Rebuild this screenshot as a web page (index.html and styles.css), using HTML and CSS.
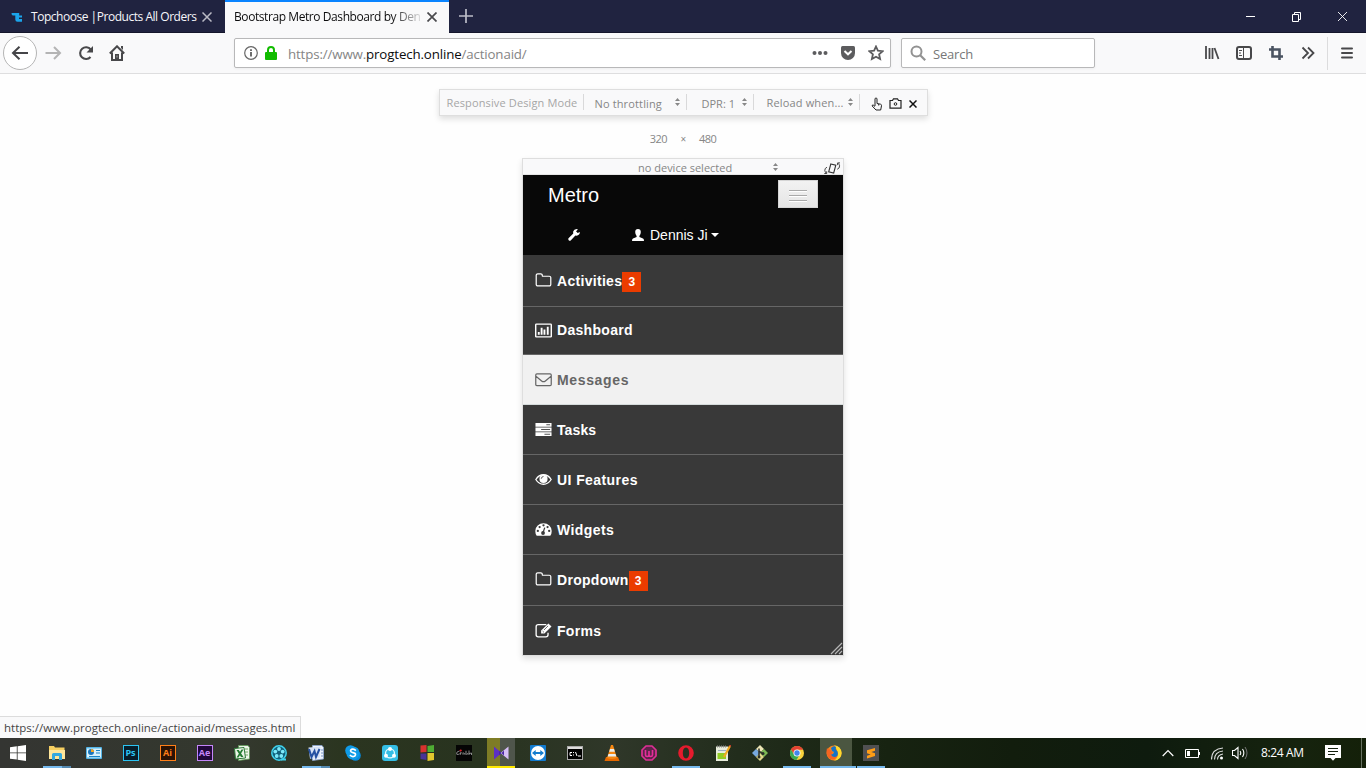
FILE: index.html
```html
<!DOCTYPE html>
<html lang="en">
<head>
<meta charset="utf-8">
<title>Bootstrap Metro Dashboard by Dennis Ji</title>
<link rel="stylesheet" href="styles.css">
</head>
<body>
<div class="screen">
  <header class="tabs">
    <div class="tab">
      <svg class="favicon" width="12" height="11" viewBox="0 0 12 11"><path d="M.5 1h7.700v2.500H11v2H8V7h3v2.700H6.500Q4.300 9.700 4.300 7.500V3.600H2Q.5 3.600.5 1z" fill="#1ba4ea"/></svg>
      <span class="tab-title first-title">Topchoose |Products All Orders</span>
      <svg class="tab-close" width="10" height="10" viewBox="0 0 10 10"><path d="M.5 .5l9 9M9.500 .5l-9 9" stroke="#b9bac4" stroke-width="1.500"/></svg>
    </div>
    <div class="tab active">
      <span class="tab-title second-title">Bootstrap Metro Dashboard by Den</span>
      <svg class="tab-close" width="10" height="10" viewBox="0 0 10 10"><path d="M.5 .5l9 9M9.500 .5L.5 9.500" stroke="#4a4a4d" stroke-width="1.700"/></svg>
    </div>
    <svg class="new-tab" width="14" height="14" viewBox="0 0 14 14"><path d="M7 0v14M0 7h14" stroke="#bcbdc8" stroke-width="1.700"/></svg>
    <div class="window-buttons">
      <svg width="11" height="11" viewBox="0 0 11 11"><path d="M1 5.500h9" stroke="#fff"/></svg>
      <svg width="11" height="11" viewBox="0 0 11 11"><path d="M1.500 3.500h6v7h-6zM3.500 3V1.500h6v7H8" fill="none" stroke="#fff"/></svg>
      <svg width="11" height="11" viewBox="0 0 11 11"><path d="M1 1l9 9M10 1l-9 9" stroke="#fff" stroke-width=".9"/></svg>
    </div>
  </header>

  <nav class="toolbar">
    <div class="back"><svg width="18" height="16" viewBox="0 0 18 16"><path d="M17 8H2M8.500 1.800L2 8l6.500 6.200" fill="none" stroke="#454548" stroke-width="2"/></svg></div>
    <svg class="forward" width="17" height="14" viewBox="0 0 17 14"><path d="M.5 7h14M9 1l6 6-6 6" fill="none" stroke="#b4b4b4" stroke-width="2"/></svg>
    <svg class="reload" width="16" height="16" viewBox="0 0 16 16"><path d="M12.700 4.500A5.900 5.900 0 1 0 12.500 12" fill="none" stroke="#48484a" stroke-width="2.100"/><path d="M15 1v6.500H8.500z" fill="#48484a"/></svg>
    <svg class="home" width="16" height="16" viewBox="0 0 16 16"><path d="M0.800 8.500L8 1.300l7.200 7.200M3 7.500v7.400h10V7.500" fill="none" stroke="#48484a" stroke-width="2"/><path d="M12 1h2v4l-2-2zM6 9h4v6H6z" fill="#48484a"/><path d="M8 10.500v2" stroke="#aaa"/></svg>
    <div class="url-box">
      <svg width="14" height="14" viewBox="0 0 14 14"><circle cx="7" cy="7" r="6.300" fill="none" stroke="#666" stroke-width="1.200"/><path d="M7 6v4.500M7 3.200v1.700" stroke="#555" stroke-width="1.700"/></svg>
      <svg class="lock" width="12" height="14" viewBox="0 0 12 14"><path d="M3 7V4a3 3 0 0 1 6 0v3" fill="none" stroke="#12bc00" stroke-width="2"/><rect y="6" width="12" height="8" rx="1" fill="#12bc00"/></svg>
      <span class="url">https://www.<b>progtech.online</b>/actionaid/</span>
      <span class="url-actions">
        <svg width="16" height="16" viewBox="0 0 16 16"><g fill="#5c5c5e"><circle cx="2.500" cy="8" r="2"/><circle cx="8" cy="8" r="2"/><circle cx="13.500" cy="8" r="2"/></g></svg>
        <svg width="16" height="16" viewBox="0 0 16 16"><path d="M2.500 1h11Q15 1 15 2.500V8A7 7 0 0 1 1 8V2.500Q1 1 2.500 1z" fill="#5c5c5e"/><path d="M4.500 6L8 9.300 11.500 6" fill="none" stroke="#fff" stroke-width="2"/></svg>
        <svg width="16" height="16" viewBox="0 0 16 16"><path d="M8 1.500l1.900 4.200 4.700.5-3.500 3.100 1 4.700L8 11.700l-4.100 2.300 1-4.700L1.400 6.200l4.700-.5z" fill="none" stroke="#5c5c5e" stroke-width="1.800"/></svg>
      </span>
    </div>
    <div class="search-box">
      <svg width="16" height="16" viewBox="0 0 16 16"><circle cx="6.500" cy="6.500" r="5" fill="none" stroke="#929292" stroke-width="2"/><path d="M10 10l5.200 5.200" stroke="#929292" stroke-width="2.200"/></svg>
      <span class="search-text">Search</span>
    </div>
    <div class="tools">
      <svg width="16" height="16" viewBox="0 0 16 16"><path d="M2 1v13M5.500 3v11M8.500 3v11M10.500 3l4 11" stroke="#48484a" stroke-width="1.800"/></svg>
      <svg width="16" height="16" viewBox="0 0 16 16"><rect x="1" y="2" width="14" height="12" rx="2" fill="none" stroke="#48484a" stroke-width="2"/><path d="M7.500 2v12M3 5.500h3M3 8h2M3 10.500h3" stroke="#48484a"/></svg>
      <svg width="16" height="16" viewBox="0 0 16 16"><path d="M4.500 1v10.500H15M1 4.500h10.500V15" fill="none" stroke="#4a5361" stroke-width="2.600"/></svg>
      <svg width="16" height="16" viewBox="0 0 16 16"><path d="M2.500 2.500L8 8l-5.500 5.500M8 2.500L13.500 8 8 13.500" fill="none" stroke="#48484a" stroke-width="1.800"/></svg>
      <i class="tool-line"></i>
      <svg class="burger" width="12" height="16" viewBox="0 0 12 16"><path d="M1 3.500h10M1 8h10M1 12.500h10" stroke="#48484a" stroke-width="2" stroke-linecap="round"/></svg>
    </div>
  </nav>

  <main class="content">
    <section class="rdm">
      <span class="cell c-name"><span class="t-rdm">Responsive Design Mode</span></span>
      <span class="cell c-throttle"><span class="t-throttle">No throttling</span><svg class="ud" width="5" height="8" viewBox="0 0 5 8"><path d="M0 3L2.500 0 5 3zM0 5l2.500 3L5 5z" fill="#888"/></svg></span>
      <span class="cell c-dpr"><span class="t-dpr">DPR: 1</span><svg class="ud" width="5" height="8" viewBox="0 0 5 8"><path d="M0 3L2.500 0 5 3zM0 5l2.500 3L5 5z" fill="#888"/></svg></span>
      <span class="cell c-reload"><span class="t-reload">Reload when...</span><svg class="ud" width="5" height="8" viewBox="0 0 5 8"><path d="M0 3L2.500 0 5 3zM0 5l2.500 3L5 5z" fill="#888"/></svg></span>
      <span class="rdm-icons">
        <svg width="12" height="14" viewBox="0 0 12 14"><path d="M4 9V2q0-1 1-1t1 1v4.500l3.500.7q1.200.3 1 1.500L9.700 13H5L1.200 9Q1 7.700 2.200 8L4 9.500M7.700 7v1.500" fill="none" stroke="#222"/></svg>
        <svg width="13" height="11" viewBox="0 0 13 11"><path d="M1 2.500h2.500L4.500 .8h4l1 1.700H12v7.700H1z" fill="none" stroke="#222" stroke-width="1.200"/><circle cx="6.500" cy="6" r="1.300" fill="none" stroke="#222"/></svg>
        <svg class="rdm-close" width="8" height="8" viewBox="0 0 8 8"><path d="M.5 .5l7 7M7.500 .5l-7 7" stroke="#111" stroke-width="1.500"/></svg>
      </span>
    </section>
    <div class="dims"><span>320</span><span class="times">×</span><span>480</span></div>

    <section class="phone">
      <div class="device"><span class="t-device">no device selected</span><svg class="ud" width="5" height="8" viewBox="0 0 5 8"><path d="M0 3L2.500 0 5 3zM0 5l2.500 3L5 5z" fill="#888"/></svg>
        <svg class="rotate" width="17" height="13" viewBox="0 0 17 13"><g fill="none" stroke="#333"><path d="M6.800 2l5 1.200-2.100 7.800-5-1.200z" stroke-width="1.100"/><path d="M3 5.200Q.6 6.200.8 8.500q.2 1.600 1.500 2.700M.3 11.500h2.400V9.300M13.200 7.300q2.600-1 2.400-3.500-.3-1.600-1.600-2.500M16 .9h-2.400v2.200" stroke-width=".9"/></g></svg>
      </div>
      <div class="brandbar">
        <div class="brand-row"><span class="brand">Metro</span><div class="toggle"><i></i><i></i><i></i></div></div>
        <div class="user-row">
          <svg class="wrench" width="12" height="12" viewBox="0 0 12 12"><path d="M8.500 0Q6 .2 5.300 2.200 5 3.400 5.300 4.500L.5 9.300Q-.1 10.200.7 11.200q1 .9 2 .2L7.400 6.600q1.600.4 3-.6Q12 4.800 11.800 3L9.700 4 8 2.300 10 .5z" fill="#fff"/></svg>
          <svg class="user" width="12" height="12" viewBox="0 0 12 12"><path d="M6 0q2.800 0 2.800 3Q8.800 5.500 7.400 7v1l3.600 1.600q1 .5 1 2.400H0q0-1.900 1-2.400L4.600 8V7Q3.200 5.500 3.200 3 3.200 0 6 0z" fill="#fff"/></svg>
          <span class="username">Dennis Ji</span><i class="caret"></i>
        </div>
      </div>
      <ul class="menu">
        <li class="r51"><svg viewBox="0 0 1792 1792"><path d="M1600 1312V608q0-40-28-68t-68-28H800q-40 0-68-28t-28-68v-64q0-40-28-68t-68-28H288q-40 0-68 28t-28 68v960q0 40 28 68t68 28h1216q40 0 68-28t28-68zm128-704v704q0 92-66 158t-158 66H288q-92 0-158-66T64 1312V352q0-92 66-158t158-66h320q92 0 158 66t66 158v32h672q92 0 158 66t66 158z"/></svg><span>Activities</span><em>3</em></li>
        <li class="r47 dash"><svg viewBox="0 0 18 18"><path d="M1.500 1.500h15q1.500 0 1.500 1.300v12.500q0 1.200-1.500 1.200h-15Q0 16.500 0 15.300V2.800Q0 1.500 1.500 1.500zM1.500 3v12h15V3z" fill-rule="evenodd"/><path d="M3 10.500h2v3H3zM6 6h2v7.500H6zM9 8h2v5.500H9zM12.500 5h2v8.500h-2z"/></svg><span>Dashboard</span></li>
        <li class="r49 hover"><svg viewBox="0 0 18 18"><path d="M2 3h14q1.200 0 1.200 1.200v10Q17.200 15.400 16 15.400H2Q.8 15.400.8 14.200v-10Q.8 3 2 3zM1 5.500q3 2.500 6 5 2 1.700 4 0l6-5" fill="none" stroke="#666" stroke-width="1.300"/></svg><span class="t-messages">Messages</span></li>
        <li class="r49"><svg viewBox="0 0 18 18"><path d="M.5 2h17v4H.5zM.5 7h17v4H.5zM.5 12h17v4H.5z"/><path d="M12 4h4M6.500 9H16M10 14h6" stroke="#555" stroke-width="1.200"/></svg><span class="t-tasks">Tasks</span></li>
        <li class="r49"><svg viewBox="0 0 18 18"><path d="M.9 9Q4 4 9 4t8.100 5Q14 14 9 14T.9 9z" fill="none" stroke="#fff" stroke-width="1.400"/><circle cx="9" cy="8.400" r="4.300"/><path d="M6.600 8.200Q6.800 6 9 5.800" fill="none" stroke="#444" stroke-width=".9"/></svg><span class="t-features">UI Features</span></li>
        <li class="r49"><svg viewBox="0 0 18 18"><path d="M.3 10.500a8.700 8.200 0 0 1 17.400 0q0 3-1.500 5.200H1.800Q.3 13.500.3 10.500z"/><g fill="#3a3a3a"><circle cx="3" cy="10.500" r="1.200"/><circle cx="4.900" cy="6.400" r="1.200"/><circle cx="9" cy="4.600" r="1.200"/><circle cx="13.300" cy="6.400" r="1.200"/><circle cx="15" cy="10.500" r="1.200"/><circle cx="8.500" cy="12.700" r="2"/></g><path d="M8.500 12.500L10.300 7" stroke="#3a3a3a" stroke-width="1.300"/></svg><span class="t-features">Widgets</span></li>
        <li class="r50"><svg viewBox="0 0 1792 1792"><path d="M1600 1312V608q0-40-28-68t-68-28H800q-40 0-68-28t-28-68v-64q0-40-28-68t-68-28H288q-40 0-68 28t-28 68v960q0 40 28 68t68 28h1216q40 0 68-28t28-68zm128-704v704q0 92-66 158t-158 66H288q-92 0-158-66T64 1312V352q0-92 66-158t158-66h320q92 0 158 66t66 158v32h672q92 0 158 66t66 158z"/></svg><span>Dropdown</span><em>3</em></li>
        <li class="r49 last"><svg viewBox="0 0 18 18"><path d="M12 2.800H3.500Q1.200 2.800 1.200 5v8.500q0 2.200 2.300 2.200h8q2.300 0 2.300-2.200v-2" fill="none" stroke="#fff" stroke-width="1.400"/><path d="M6.500 9L14.200 1.500l3.300 3.200L10 12.300H6.500z"/><path d="M8 9.500l1.500 1.500M9.500 8.500l4.300-4.300" stroke="#555" stroke-width=".9"/></svg><span>Forms</span></li>
      </ul>
      <svg class="grip" width="13" height="13" viewBox="0 0 13 13"><path d="M1 12L12 1M5 12l7-7M9 12l3-3" stroke="#b5b5b5" stroke-width="1.200"/></svg>
    </section>
    <div class="status"><span class="t-status">https://www.progtech.online/actionaid/messages.html</span></div>
  </main>

  <footer class="taskbar">
    <div class="app start"><svg viewBox="0 0 16 16"><path d="M0 2.300L6.800 1.300v6.200H0zM7.600 1.200L16 0v7.500H7.600zM0 8.300h6.800v6.300L0 13.700zM7.600 8.300H16V16l-8.400-1.200z" fill="#fff"/></svg></div>
    <div class="app open multi"><svg viewBox="0 0 16 16"><path d="M0 1h5l1 1.500h9.500V14H0z" fill="#f6cf61"/><path d="M0 5h16v9H0z" fill="#ffe69a"/><path d="M3 15V9.500Q3 8 4.500 8h7Q13 8 13 9.500V15h-3v-4H6v4z" fill="#34a8df"/></svg></div>
    <div class="app"><svg viewBox="0 0 16 16"><rect y="2" width="16" height="12" rx="1" fill="#55b5e7"/><path d="M1 3.500h14v9H1z" fill="#d8f1fc"/><circle cx="5" cy="7" r="3" fill="#1b75bb"/><path d="M5 7V4a3 3 0 0 1 3 3z" fill="#f5a623"/><path d="M10 5.500h4M10 8h4M3 11.500h11" stroke="#1b84c5" stroke-width="1.200"/></svg></div>
    <div class="app"><div class="adobe ps">Ps</div></div>
    <div class="app"><div class="adobe ai">Ai</div></div>
    <div class="app"><div class="adobe ae">Ae</div></div>
    <div class="app"><svg viewBox="0 0 16 16"><path d="M4.500.5H14l1.500 2V14l-11 1.500z" fill="#edf5e9" stroke="#5f9a57" stroke-width=".8"/><path d="M11 4h3M11 7h3M11 10h3" stroke="#74a867"/><path d="M.5 3.500L10 2.500l1.500 10.500-10 1z" fill="#edf5e9" stroke="#2c7a37"/><path d="M2.500 5h2.300l4.700 7H7zM7.500 4.500h2l-5 8h-2z" fill="#237b31"/></svg></div>
    <div class="app"><svg viewBox="0 0 16 16"><circle cx="8" cy="8" r="7.200" fill="#11617b" stroke="#3fd2ed" stroke-width="1.500"/><g fill="#7de9f9"><circle cx="8" cy="4" r="1.900"/><circle cx="4.300" cy="6.600" r="1.900"/><circle cx="11.700" cy="6.600" r="1.900"/><circle cx="5.700" cy="11" r="1.900"/><circle cx="10.300" cy="11" r="1.900"/></g><path d="M10 14.500h5" stroke="#3fd2ed" stroke-width="2"/></svg></div>
    <div class="app open multi"><svg viewBox="0 0 16 16"><path d="M4.500.5H14l1.500 2V14l-11 1.500z" fill="#eef3fc" stroke="#8aa5d0" stroke-width=".8"/><path d="M13 5h2M13 8h2M13 11h2" stroke="#7794c4"/><path d="M.5 2.500l12-.7-1 11-9.500 1z" fill="#d6e1f5"/><path d="M1 4l2.500 8 3-6 1.500 6 3.500-8" fill="none" stroke="#2450a2" stroke-width="2"/></svg></div>
    <div class="app"><svg viewBox="0 0 16 16"><circle cx="5.500" cy="5.500" r="5.300" fill="#119be8"/><circle cx="10.500" cy="10.500" r="5.300" fill="#0789da"/><circle cx="8" cy="8" r="6.600" fill="#0e9be7"/><path d="M10.800 5.600Q9.500 4 7.600 4.200 5.500 4.500 5.600 6q.1 1.300 2.400 1.700 2.700.5 2.500 2.200-.3 1.700-2.500 1.700-2 0-3-1.700" fill="none" stroke="#fff" stroke-width="1.700"/></svg></div>
    <div class="app"><svg viewBox="0 0 16 16"><rect width="16" height="16" rx="3" fill="#35bee5"/><circle cx="8" cy="8.400" r="4.500" fill="none" stroke="#e4faff" stroke-width="1.300"/><g fill="#fff"><circle cx="8" cy="4" r="2"/><circle cx="4" cy="10.800" r="2"/><circle cx="12" cy="10.800" r="2"/></g></svg></div>
    <div class="app"><svg viewBox="0 0 16 16"><path d="M1.500.5l6-.5v7l-6 .5z" fill="#d8322e"/><path d="M8.500 1L15 0v7H8.500z" fill="#4fad34"/><path d="M1.500 8.500h6V15l-6-1z" fill="#493396"/><path d="M8.500 8H15v7l-6.500 1z" fill="#e2c72e"/></svg></div>
    <div class="app"><svg viewBox="0 0 16 16"><rect width="16" height="16" fill="#050505"/><path d="M3.500 6.200Q0 6.500.8 9.300q1.500.8 2.700-.8M4 10l1-3M5.500 8h1M7.500 7.500l-.7 2M9 8L8 9.700M10 10V5.800M12 8l-1 1.700M13 5.500V10M13 8.500l2.500-.5v2" fill="none" stroke="#aaa" stroke-width=".8"/><path d="M3.800 6l1.700-1" stroke="#d91c25" stroke-width="2"/></svg></div>
    <div class="app kmp"><svg viewBox="0 0 16 16"><path d="M1 1.500L8.500 8 1 14.500z" fill="#5c2fc4"/><path d="M15.500 1.500L7.500 8l8 6.500z" fill="#d6bdf7"/><path d="M6 5.800L8.500 8 11 5.500v5L8.500 8 6 10.200z" fill="#4a25a5"/></svg></div>
    <div class="app"><svg viewBox="0 0 16 16"><rect width="16" height="16" rx="1" fill="#127bd0"/><circle cx="8" cy="8" r="7" fill="#fff"/><path d="M2 8l3.700-3v2h4.600V5L14 8l-3.700 3V9H5.700v2z" fill="#137cce"/></svg></div>
    <div class="app"><svg viewBox="0 0 16 16"><rect x=".5" y="1.500" width="15" height="13" fill="#000" stroke="#aaa"/><path d="M1 3h14" stroke="#ddd" stroke-width="2"/><path d="M5 7.500H3v3h2M6.500 7v1M6.500 9.500v1M8.500 7l1.500 4M11 11h3" fill="none" stroke="#fff"/></svg></div>
    <div class="app"><svg viewBox="0 0 16 16"><path d="M2 12h12l1.500 4H.5z" fill="#e76900"/><path d="M7 0h2l4 13q-5 2-10 0z" fill="#f58813"/><path d="M6 4h4l.8 2.700H5.200zM4.500 9h7l.8 2.500H3.700z" fill="#e9eef0"/></svg></div>
    <div class="app"><svg viewBox="0 0 16 16"><path d="M5 1h6l4 4v6l-4 4H5l-4-4V5z" fill="#5d2449" stroke="#df2f96" stroke-width="1.700" stroke-linejoin="round"/><path d="M4.500 5v5q0 1.500 1.700 1.500T8 10V6v4q0 1.500 1.700 1.500T11.500 10V5" fill="none" stroke="#e72d9b" stroke-width="1.600"/></svg></div>
    <div class="app open"><svg viewBox="0 0 16 16"><path fill-rule="evenodd" d="M8 .2a7.800 7.800 0 1 0 0 15.600A7.800 7.800 0 1 0 8 .2zM8 2.500c2 0 3.200 2.400 3.200 5.500S10 13.500 8 13.500 4.800 11.100 4.800 8 6 2.500 8 2.500z" fill="#e51b2d"/></svg></div>
    <div class="app"><svg viewBox="0 0 16 16"><path d="M1 1.500h12V16H1z" fill="#e8eddc"/><path d="M2 1.500h10" stroke="#888" stroke-width="2" stroke-dasharray="1 1"/><path d="M2.500 8H11v6H2.500z" fill="#91cd24"/><path d="M3 5.500h8" stroke="#9dacc0"/><path d="M15 1l-6 11" stroke="#efaa22" stroke-width="2.200"/><path d="M14.500 0l1.500 1" stroke="#bf362d" stroke-width="2"/></svg></div>
    <div class="app"><svg viewBox="0 0 16 16"><path d="M8 0l4 4-4 4-4-4z" fill="#ece5b6"/><path d="M4 4l4 4-4 4-4-4z" fill="#77a8dd"/><path d="M12 4l4 4-4 4-4-4z" fill="#7dba55"/><path d="M8 8l4 4-4 4-4-4z" fill="#e2d98b"/><path d="M7 3.500v9M7 6l4 3" stroke="#292d28" stroke-width="1.500"/><circle cx="7" cy="12" r="1.500" fill="#292d28"/><circle cx="11" cy="8.500" r="1.500" fill="#292d28"/></svg></div>
    <div class="app open"><svg viewBox="0 0 16 16"><circle cx="8" cy="8" r="7" fill="#f9d33c"/><path d="M1.900 4.500A7 7 0 0 1 14.200 4.700H8L5 9.600z" fill="#e34133"/><path d="M1.900 4.500A7 7 0 0 0 7.500 15l3-5L5 9.600z" fill="#39a854"/><circle cx="8" cy="8" r="3.500" fill="#fff"/><circle cx="8" cy="8" r="2.700" fill="#4286ed"/></svg></div>
    <div class="app open focused"><svg viewBox="0 0 16 16"><circle cx="8" cy="8" r="7.500" fill="#f9851b"/><path d="M8 .3Q15 1 15.700 8q-.4 7-7.700 7.800Q12.500 13 12 8 10 2 8 .3z" fill="#ffd92e"/><path d="M5 3Q8 0 10 2q-1 2 1.500 4.500 1.500 5-3 6.200Q5 13 4 9.500l3-.5 1-2-2-1z" fill="#1673c7"/><path d="M1 3q1 1.500 3 1.500L7 8l-2 1.800Q7 13 11 11.500 8 16 3.500 13.500-.5 10 1 3z" fill="#f56521"/></svg></div>
    <div class="app open"><svg viewBox="0 0 16 16"><rect width="16" height="16" fill="#505052"/><path d="M4 5.300L12 3v2.800L8.300 7 12 8.200v2.900L4 13.500v-2.800l3.700-1.200L4 8.300z" fill="#ff9d16"/></svg></div>
    <div class="tray">
      <svg class="up" width="12" height="8" viewBox="0 0 12 8"><path d="M.7 7L6 1.500 11.300 7" fill="none" stroke="#fff" stroke-width="1.200"/></svg>
      <svg class="battery" width="15" height="9" viewBox="0 0 15 9"><path d="M.5.500h13v8H.5zM14.500 3v3" fill="none" stroke="#fff"/><path d="M2 2h3v5H2z" fill="#fff"/></svg>
      <svg class="wifi" width="12" height="13" viewBox="0 0 12 13"><g fill="none" stroke="#ddd"><path d="M.5 12.500Q.5 2 12 1M3.500 12.500Q3.500 5 12 4M6.500 12.500Q6.500 8 12 7" stroke-width="1.100"/></g><circle cx="10.500" cy="11" r="1.500" fill="#fff"/></svg>
      <svg class="volume" width="16" height="14" viewBox="0 0 16 14"><path d="M.5 4.500h2L6 1.500v11L2.500 9.500h-2zM8 5q1.500 2 0 4M10.500 3q2.700 4 0 8" fill="none" stroke="#fff" stroke-width="1.100"/><path d="M13 1q4 6 0 12" fill="none" stroke="#777"/></svg>
      <span class="clock">8:24 AM</span>
      <svg class="action" width="16" height="16" viewBox="0 0 16 16"><path d="M0 0h16v13h-5.500L8 15.800 5.500 13H0z" fill="#fff"/><path d="M3 3.500h10M3 6.500h10M3 9.500h7" stroke="#13210e"/></svg>
      <i class="peek"></i>
    </div>
  </footer>
</div>
</body>
</html>
```
FILE: styles.css
```css
* { box-sizing: border-box; }
body { margin: 0; font-family: "Open Sans", "Noto Sans", sans-serif; }
svg { display: block; flex: none; }
i { display: block; flex: none; }
.screen { width: 1366px; height: 768px; display: flex; flex-direction: column; overflow: hidden; background: #fefefe; }

.tabs { height: 33px; flex: none; display: flex; align-items: center; background: #202340; box-shadow: inset 0 -1px #14162b; font-size: 12px; white-space: nowrap; }
.tab { width: 225px; height: 33px; display: flex; align-items: center; color: #f6f6fa; padding: 0 13px 0 11px; }
.tab.active { width: 224px; background: #f9f9fa; border-top: 2px solid #0a84ff; color: #0c0c0d; padding: 0 12px 2px 9px; }
.tab-close { margin-left: auto; }
.favicon { margin-top: 1px; }
.first-title { margin-left: 8px; letter-spacing: -.47px; }
.second-title { width: 187px; letter-spacing: -.42px; mask-image: linear-gradient(90deg, #000 84%, transparent 102%); }
.new-tab { margin: 0 0 2px 10px; }
.window-buttons { margin-left: auto; margin-right: 18px; display: flex; gap: 35px; }

.toolbar { height: 41px; flex: none; display: flex; align-items: center; background: #f9f9fa; border-bottom: 1px solid #dededf; padding-left: 3px; }
.back { width: 34px; height: 34px; border: 1px solid #b5b5b5; border-radius: 50%; background: #fff; display: flex; align-items: center; justify-content: center; }
.forward { margin-left: 8px; }
.reload { margin-left: 16px; }
.home { margin-left: 15px; }
.url-box, .search-box { height: 30px; border: 1px solid #b8b8b9; border-radius: 2px; background: #fff; display: flex; align-items: center; box-shadow: 0 1px 3px rgba(0,0,0,.05); }
.url-box { width: 657px; margin-left: 109px; padding: 0 6px 0 9px; }
.lock { margin: 0 11px 0 7px; }
.url { font-size: 13.300px; color: #858585; letter-spacing: -.14px; padding-top: 2px; }
.url b { font-weight: 400; color: #0c0c0d; }
.url-actions { margin-left: auto; display: flex; gap: 12px; }
.search-box { width: 194px; margin-left: 10px; padding-left: 8px; }
.search-text { margin-left: 7px; font-size: 13px; color: #777; letter-spacing: -.2px; padding-top: 2px; }
.tools { margin-left: auto; display: flex; align-items: center; gap: 16px; }
.tool-line { width: 1px; height: 33px; background: #dcdcdd; margin-left: -5px; }
.burger { margin: 0 13px 0 -3px; }

.content { height: 664px; flex: none; position: relative; display: flex; flex-direction: column; align-items: center; padding-top: 15px; }
.rdm { width: 489px; height: 27px; border: 1px solid #dedede; background: #f9f9fa; box-shadow: 0 3px 6px rgba(0,0,0,.13); display: flex; align-items: center; font-size: 11px; color: #868686; white-space: nowrap; }
.cell { height: 16px; display: flex; align-items: center; border-right: 1px solid #d9d9da; margin-top: -1px; }
.ud { margin-left: auto; }
.c-name { width: 144px; padding-left: 7px; color: #a6a6a6; letter-spacing: .13px; }
.c-throttle { width: 103px; padding: 0 6px 0 11px; letter-spacing: .14px; }
.c-dpr { width: 67px; padding: 0 6px 0 15px; }
.c-reload { width: 106px; padding: 0 6px 0 13px; letter-spacing: .16px; }
.t-throttle, .t-dpr { padding-top: 2px; }
.rdm-icons { display: flex; align-items: center; gap: 6px; padding: 2px 0 0 11px; }
.rdm-close { margin-left: 1px; }
.dims { display: flex; justify-content: center; height: 15px; line-height: 15px; margin-top: 15px; font-size: 11px; color: #868686; letter-spacing: -.5px; }
.times { width: 32px; text-align: center; font-size: 10px; line-height: 17px; }

.phone { position: relative; width: 322px; height: 498px; margin-top: 12px; border: 1px solid #dedede; box-shadow: 0 3px 6px rgba(0,0,0,.12); font-family: "Liberation Sans", Arial, sans-serif; }
.device { height: 16px; display: flex; align-items: center; background: #f9f9fa; border-bottom: 1px solid #e5e5e5; padding-left: 115px; font: 11px "Open Sans", sans-serif; color: #868686; }
.device .ud { margin-left: 41px; }
.t-device { padding-top: 2px; }
.rotate { margin: 3px 2px 0 auto; }
.brandbar { height: 80px; background: #080808; color: #fff; }
.brand-row { height: 40px; display: flex; align-items: center; justify-content: space-between; padding: 0 25px; }
.brand { font-size: 20px; }
.toggle { width: 40px; height: 28px; margin-top: -2px; border: 1px solid #d5d5d5; background: linear-gradient(#f2f2f2, #e5e5e5); display: flex; flex-direction: column; align-items: center; justify-content: center; gap: 3px; padding-top: 3px; }
.toggle i { width: 18px; height: 2px; background: #fff; border-top: 1px solid #a9a9a9; }
.user-row { height: 40px; display: flex; align-items: center; font-size: 14px; }
.wrench { margin-left: 45px; }
.user { margin-left: 52px; }
.username { margin-left: 6px; }
.caret { border: 4px solid transparent; border-top-color: #fff; border-bottom: 0; margin-left: 3px; }
.menu { list-style: none; margin: 0; padding: 0; background: #393939; }
.menu li { box-sizing: content-box; display: flex; align-items: center; border-bottom: 1px solid #666; padding-left: 12px; color: #fff; font-size: 14px; font-weight: 700; letter-spacing: .3px; }
.menu svg { width: 17px; height: 17px; margin: -1px 5px 0 0; fill: #fff; }
.menu em { font: 700 12px/20px "Liberation Sans", Arial, sans-serif; width: 19px; height: 20px; text-align: center; background: #eb3c00; letter-spacing: 0; margin-top: 2px; }
.menu .dash span { margin-top: -2px; }
.menu .t-messages { letter-spacing: .65px; }
.menu .t-tasks { letter-spacing: .1px; }
.menu .t-features { letter-spacing: .42px; }
.r47 { height: 47px; }
.r49 { height: 49px; }
.r50 { height: 50px; }
.r51 { height: 51px; }
.menu .hover { background: #f1f1f1; color: #666; border-color: #d5dbdb; }
.menu .last { border: 0; }
.grip { position: absolute; right: 0; bottom: 0; }
.status { position: absolute; left: 0; bottom: 0; width: 301px; height: 22px; background: #f9f9fa; border: 1px solid #dcdcdc; border-width: 1px 1px 0 0; padding-left: 4px; line-height: 22px; font-size: 11.500px; color: #444; white-space: nowrap; }

.taskbar { height: 30px; flex: none; display: flex; background: linear-gradient(90deg, #343532 0, #33382d 18%, #2b3520 25%, #28331f 35%, #2f3729 45%, #222d1c 54%, #172311 65%, #121d0d 74%, #0e1b0e 84%, #16230e 95%, #142009 100%); }
.app { width: 37px; height: 30px; display: flex; justify-content: center; align-items: center; position: relative; }
.app svg { width: 16px; height: 16px; }
.start { width: 38px; padding-right: 2px; }
.open::after { content: ""; position: absolute; left: 5px; bottom: 0; width: 28px; height: 2px; background: #76b9ed; }
.multi::after { background: linear-gradient(90deg, #76b9ed 19px, #5489b0 19px); }
.adobe { width: 16px; height: 16px; border: 1px solid; font: 700 9px/13px "Open Sans", sans-serif; text-align: center; }
.ps { color: #2bc4f3; background: #081e2b; }
.ai { color: #ff7f18; background: #2b1305; }
.ae { color: #c486fa; background: #21083b; }
.kmp { background: linear-gradient(90deg, transparent 5px, #7e7c25 5px 18px, #4f554b 18px 33px, transparent 33px); }
.kmp::after { content: ""; position: absolute; left: 5px; bottom: 0; width: 28px; height: 2px; background: #ffea00; }
.focused { background: linear-gradient(90deg, transparent 5px, #4b5641 5px 37px); }
.focused::after { width: 36px; }
.tray { margin-left: auto; display: flex; align-items: center; color: #fff; }
.battery { margin-left: 11px; }
.wifi { margin-left: 11px; }
.volume { margin-left: 9px; }
.clock { font-size: 12px; margin: -1px 0 0 13px; letter-spacing: -.35px; width: 44px; white-space: nowrap; }
.action { margin-left: 20px; }
.peek { width: 1px; height: 30px; background: #667060; margin: 0 4px 0 20px; }
```
